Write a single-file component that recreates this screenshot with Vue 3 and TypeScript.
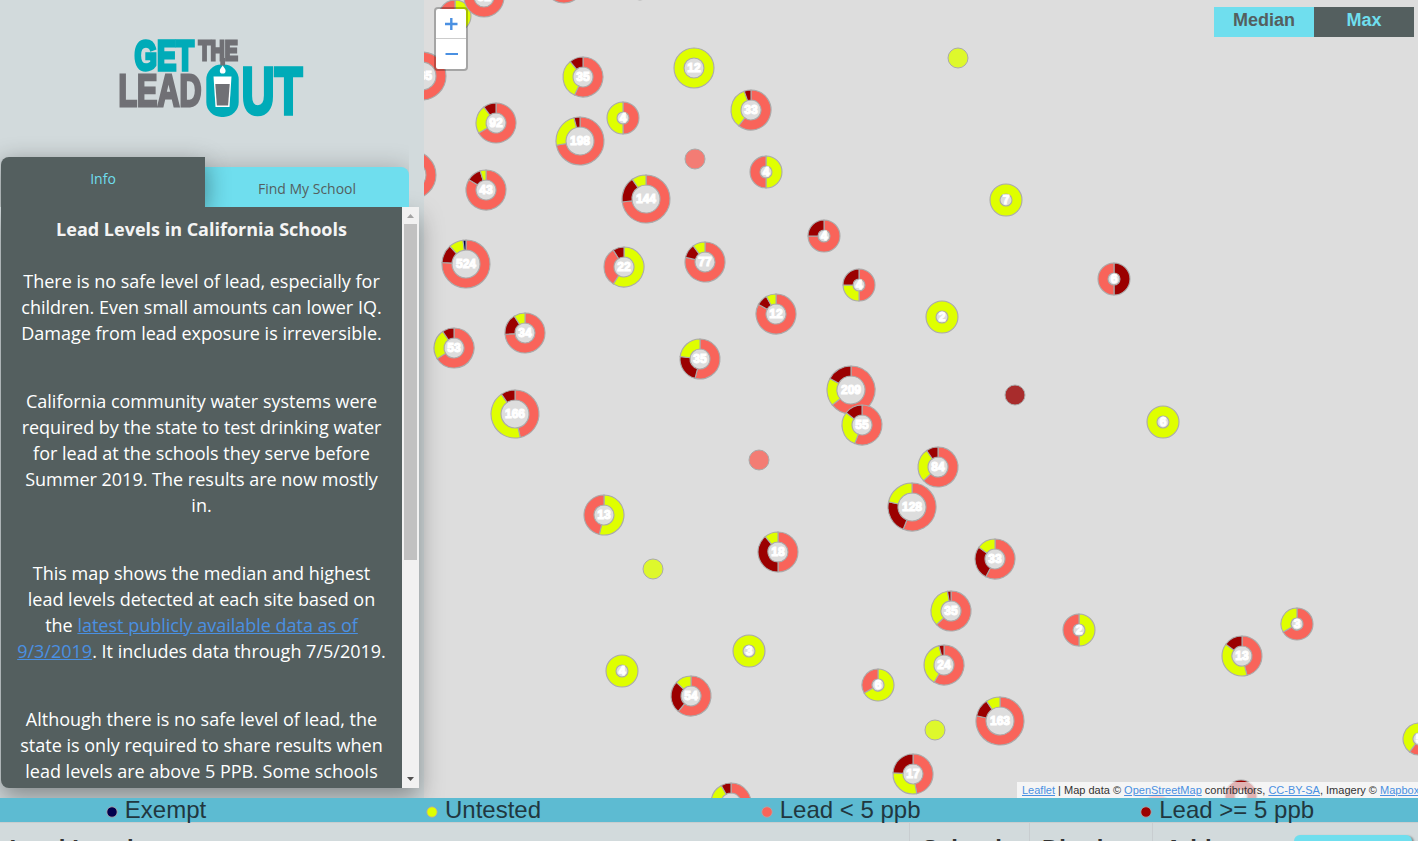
<script setup lang="ts">
type Tone = 'r' | 'y' | 'd' | 'n'
interface Slice { tone: Tone; to: number }
interface Cluster { x: number; y: number; r: number; label: string; slices: Slice[] }

const fills: Record<Tone, string> = { r: '#f9645a', y: '#dfff00', d: '#9b0000', n: '#00004d' }

// x, y, radius, count, then "tone:end fraction" pairs going clockwise from the top
const rows: [number, number, number, string, string][] = [
  [422, 76, 24, '165', 'r:1'],
  [412, 175, 24, '', 'r:1'],
  [455, 16, 16, '', 'y:.5 r:1'],
  [484, -3, 20, '51', 'r:1'],
  [564, -17, 20, '', 'r:1'],
  [583, 77, 20, '35', 'r:.57 y:.89 d:1'],
  [694, 68, 20, '12', 'y:1'],
  [496, 123, 20, '92', 'r:.667 y:.897 d:1'],
  [580, 141, 24, '198', 'r:.722 y:.96 d:1'],
  [623, 118, 16, '4', 'r:.5 y:1'],
  [751, 110, 20, '33', 'r:.606 y:.945 d:1'],
  [486, 190, 20, '43', 'r:.837 d:.953 y:1'],
  [646, 199, 24, '144', 'r:.73 d:.903 y:1'],
  [766, 172, 16, '4', 'y:.5 r:1'],
  [1006, 200, 16, '7', 'y:1'],
  [466, 264, 24, '524', 'r:.76 d:.883 y:.98 n:1'],
  [624, 267, 20, '22', 'y:.59 r:.91 d:1'],
  [705, 262, 20, '77', 'r:.788 d:.9 y:1'],
  [525, 333, 20, '34', 'r:.74 d:.91 y:1'],
  [454, 348, 20, '53', 'r:.66 y:.905 d:1'],
  [700, 359, 20, '35', 'r:.54 d:.77 y:1'],
  [515, 414, 24, '166', 'r:.465 y:.905 d:1'],
  [776, 314, 20, '12', 'r:.83 d:.92 y:1'],
  [824, 236, 16, '4', 'r:.75 d:1'],
  [859, 285, 16, '4', 'r:.5 y:.75 d:1'],
  [942, 317, 16, '2', 'y:1'],
  [1114, 279, 16, '6', 'd:.5 r:1'],
  [1163, 422, 16, '6', 'y:1'],
  [851, 390, 24, '209', 'r:.643 y:.83 d:1'],
  [862, 425, 20, '55', 'r:.56 y:.855 d:1'],
  [938, 467, 20, '84', 'r:.63 y:.905 d:1'],
  [912, 507, 24, '128', 'r:.56 d:.785 y:1'],
  [778, 552, 20, '18', 'r:.5 d:.89 y:1'],
  [604, 515, 20, '13', 'y:.538 r:1'],
  [995, 559, 20, '33', 'r:.576 d:.85 y:1'],
  [951, 611, 20, '35', 'r:.63 y:.972 d:1'],
  [944, 665, 20, '24', 'r:.583 y:.96 d:1'],
  [622, 671, 16, '4', 'y:1'],
  [749, 651, 16, '3', 'y:1'],
  [691, 696, 20, '54', 'r:.61 d:.87 y:1'],
  [878, 685, 16, '6', 'y:.667 r:1'],
  [1000, 721, 24, '163', 'r:.785 d:.905 y:1'],
  [913, 774, 20, '17', 'r:.47 y:.76 d:1'],
  [731, 803, 20, '', 'r:.6 y:.92 d:1'],
  [1079, 630, 16, '2', 'y:.5 r:1'],
  [1242, 656, 20, '13', 'r:.46 y:.85 d:1'],
  [1297, 624, 16, '3', 'r:.667 y:1'],
  [1419, 739, 16, '5', 'r:.6 y:1'],
  [1241, 796, 16, '2', 'd:1'],
  [1157, 811, 16, '', 'r:1'],
]

const clusters: Cluster[] = rows.map(([x, y, r, label, spec]) => ({
  x, y, r, label,
  slices: spec.split(' ').map((s) => {
    const [tone, to] = s.split(':')
    return { tone: tone as Tone, to: Number(to) }
  }),
}))

const dots: { x: number; y: number; tone: Tone }[] = [
  { x: 958, y: 58, tone: 'y' },
  { x: 695, y: 159, tone: 'r' },
  { x: 1015, y: 395, tone: 'd' },
  { x: 759, y: 460, tone: 'r' },
  { x: 653, y: 569, tone: 'y' },
  { x: 935, y: 730, tone: 'y' },
  { x: 640, y: -10, tone: 'r' },
]

function ring(c: Cluster, i: number): string {
  const R = c.r
  const q = c.r - 10
  const a0 = (i ? c.slices[i - 1].to : 0) * Math.PI * 2
  const a1 = c.slices[i].to * Math.PI * 2
  const p = (rad: number, a: number) => `${(rad * Math.sin(a)).toFixed(2)} ${(-rad * Math.cos(a)).toFixed(2)}`
  if (a1 - a0 > 6.28) {
    return `M0 ${-R}A${R} ${R} 0 1 1 0 ${R}A${R} ${R} 0 1 1 0 ${-R}M0 ${-q}A${q} ${q} 0 1 0 0 ${q}A${q} ${q} 0 1 0 0 ${-q}`
  }
  const big = a1 - a0 > Math.PI ? 1 : 0
  return `M${p(R, a0)}A${R} ${R} 0 ${big} 1 ${p(R, a1)}L${p(q, a1)}A${q} ${q} 0 ${big} 0 ${p(q, a0)}Z`
}

const legend: { tone: Tone; label: string }[] = [
  { tone: 'n', label: 'Exempt' },
  { tone: 'y', label: 'Untested' },
  { tone: 'r', label: 'Lead < 5 ppb' },
  { tone: 'd', label: 'Lead >= 5 ppb' },
]
</script>

<template>
  <div class="page">
    <div class="main">
      <aside class="side">
        <header class="brand">
          <svg width="424" height="157" viewBox="0 0 424 157" class="logo">
            <g class="teal">
              <text x="134.500" y="69.500" font-size="43" textLength="59.500" lengthAdjust="spacingAndGlyphs">GET</text>
              <text x="241.500" y="114" font-size="66" textLength="61" lengthAdjust="spacingAndGlyphs">UT</text>
            </g>
            <g class="gray">
              <text x="198.500" y="59.600" font-size="28.500" textLength="39.500" lengthAdjust="spacingAndGlyphs">THE</text>
              <text x="118.500" y="105.700" font-size="43.500" textLength="83" lengthAdjust="spacingAndGlyphs">LEAD</text>
            </g>
            <rect x="206.300" y="64.500" width="32.400" height="52.500" rx="15" fill="#00abb8" />
            <path d="M220.300 58h4.800v7.500h-4.800z" fill="#707075" />
            <path d="M222.700 65.500c.8 2 2.900 3.200 2.900 5.200a2.900 2.900 0 0 1-5.800 0c0-2 2.100-3.200 2.900-5.200z" fill="#fff" />
            <path d="M213.500 76.500h18l-2 30.500h-14z" fill="#fff" />
            <path d="M215.300 84h14.400l-1.600 21.500h-11.200z" fill="#707075" />
          </svg>
        </header>
        <nav class="tabs">
          <div class="tab on">Info</div>
          <div class="tab off">Find My School</div>
        </nav>
        <div class="panel">
          <div class="copy">
            <h1>Lead Levels in California Schools</h1>
            <p>There is no safe level of lead, especially for<br>children. Even small amounts can lower IQ.<br>Damage from lead exposure is irreversible.</p>
            <p>California community water systems were<br>required by the state to test drinking water<br>for lead at the schools they serve before<br>Summer 2019. The results are now mostly<br>in.</p>
            <p>This map shows the median and highest<br>lead levels detected at each site based on<br>the <a>latest publicly available data as of<br>9/3/2019</a>. It includes data through 7/5/2019.</p>
            <p>Although there is no safe level of lead, the<br>state is only required to share results when<br>lead levels are above 5 PPB. Some schools</p>
          </div>
          <div class="bar">
            <svg width="17" height="17" viewBox="0 0 17 17"><path d="M5 11l3.500-4L12 11z" fill="#a3a3a3" /></svg>
            <div class="thumb"></div>
            <svg width="17" height="17" viewBox="0 0 17 17" class="down"><path d="M5 6h7L8.500 10z" fill="#505050" /></svg>
          </div>
        </div>
      </aside>

      <section class="map">
        <svg width="994" height="798" viewBox="424 0 994 798" class="pins">
          <circle v-for="(d, i) in dots" :key="'d' + i" :cx="d.x" :cy="d.y" r="10" :fill="fills[d.tone]" fill-opacity=".8" stroke="#aaa" />
          <g v-for="(c, i) in clusters" :key="i" :transform="`translate(${c.x} ${c.y})`">
            <path v-for="(s, k) in c.slices" :key="k" :d="ring(c, k)" :fill="fills[s.tone]" stroke="#aaa" stroke-width="1.100" />
            <text y="4.300" text-anchor="middle">{{ c.label }}</text>
          </g>
        </svg>
        <div class="zoom">
          <div class="zin"><svg width="30" height="29" viewBox="0 0 30 29"><path d="M9 15h12.500M15.300 9v12" stroke="#4a90e2" stroke-width="2.400" fill="none" /></svg></div>
          <div><svg width="30" height="30" viewBox="0 0 30 30"><path d="M9.500 15h12.500" stroke="#4a90e2" stroke-width="2" /></svg></div>
        </div>
        <div class="switch">
          <div class="median">Median</div>
          <div class="max">Max</div>
        </div>
        <div class="credit"><a>Leaflet</a> | Map data © <a>OpenStreetMap</a> contributors, <a>CC-BY-SA</a>, Imagery © <a>Mapbox</a></div>
      </section>
    </div>

    <div class="legend">
      <div v-for="l in legend" :key="l.label" class="key">
        <svg width="12" height="12" viewBox="0 0 12 12"><circle cx="6" cy="6" r="5.200" :fill="fills[l.tone]" stroke="#b5a5a8" stroke-width=".8" /></svg>
        <span>{{ l.label }}</span>
      </div>
    </div>

    <div class="thead">
      <div class="th wide">Lead Level</div>
      <div class="th school">School</div>
      <div class="th district">District</div>
      <div class="th address">Address</div>
      <div class="btn"></div>
    </div>
  </div>
</template>

<style>
html, body { margin: 0; overflow: hidden; }
</style>

<style scoped>
.page {
  width: 1418px;
  height: 841px;
  overflow: hidden;
  background: #d2dadc;
  font-family: "Liberation Sans", Arial, sans-serif;
}
.main { display: flex; height: 798px; overflow: hidden; }
.side {
  position: relative;
  z-index: 2;
  width: 424px;
  height: 798px;
  flex: none;
  background: #d2dadc;
}
.brand { height: 157px; }
.logo { display: block; filter: blur(.35px); }
.logo text { font-family: "Liberation Sans", Arial, sans-serif; font-weight: bold; }
.teal { fill: #00abb8; stroke: #00abb8; stroke-width: 3.600; }
.gray { fill: #707075; stroke: #707075; stroke-width: 2.800; }
.tabs {
  display: flex;
  align-items: flex-end;
  width: 408px;
  height: 50px;
  margin-left: 1px;
  font: 14px "Open Sans", "Noto Sans", sans-serif;
  text-align: center;
  clip-path: inset(-30px 0 0 -1px);
}
.tab { width: 204px; box-sizing: border-box; box-shadow: 0 0 24px rgba(0, 0, 0, .22); }
.on {
  position: relative;
  z-index: 1;
  height: 50px;
  line-height: 44px;
  color: #6fdeee;
  background: #545f5f;
  border-radius: 8px 0 0 0;
}
.off {
  height: 40px;
  line-height: 43px;
  color: #545f5f;
  background: #6fdeee;
  border-radius: 0 8px 0 0;
}
.on { box-shadow: 0 6px 24px rgba(0, 0, 0, .42); }
.panel {
  display: flex;
  width: 418px;
  height: 581px;
  margin-left: 1px;
  background: #545f5f;
  border-radius: 0 0 0 8px;
  box-shadow: 0 10px 24px rgba(0, 0, 0, .36);
}
.copy {
  width: 401px;
  height: 581px;
  box-sizing: border-box;
  padding-top: 9px;
  overflow: hidden;
  color: #fff;
  font: 18px/26px "Open Sans", "Noto Sans", sans-serif;
  text-align: center;
  white-space: nowrap;
}
h1 { margin: 0 0 26px; font-size: 18px; line-height: 26px; font-weight: 700; color: #f4f4f4; }
p { margin: 0 0 42px; }
.copy a { color: #4a90e2; text-decoration: underline; }
.bar { display: flex; flex-direction: column; width: 17px; background: #f1f1f1; }
.bar svg { display: block; }
.thumb { width: 13px; height: 336px; margin: 0 2px; background: #c1c1c1; }
.down { margin-top: auto; }
.map { position: relative; width: 994px; height: 798px; overflow: hidden; background: #ddd; }
.pins { display: block; }
.pins text { font: bold 12px "Liberation Sans", Arial, sans-serif; fill: #fff; stroke: #fff; stroke-width: 1.100px; }
.zoom {
  position: absolute;
  left: 10px;
  top: 7px;
  width: 30px;
  height: 60px;
  border: 2px solid rgba(0, 0, 0, .25);
  border-radius: 4px;
  background: #fff;
  background-clip: padding-box;
}
.zoom svg { display: block; }
.zin { border-bottom: 1px solid #ccc; }
.switch {
  position: absolute;
  top: 7px;
  right: 4px;
  display: flex;
  font-weight: bold;
  font-size: 18px;
  line-height: 26px;
  text-align: center;
}
.switch div { width: 100px; height: 30px; }
.median { background: #6fdeee; color: #545f5f; }
.max { background: #545f5f; color: #6fdeee; }
.credit {
  position: absolute;
  left: 593px;
  bottom: 0;
  width: 420px;
  height: 16px;
  padding-left: 5px;
  background: rgba(255, 255, 255, .7);
  color: #333;
  font-size: 11px;
  line-height: 16px;
  white-space: nowrap;
}
.credit a { color: #4a90e2; text-decoration: underline; }
.legend {
  position: relative;
  z-index: 3;
  display: flex;
  justify-content: space-around;
  height: 24px;
  margin: 0 -6px 0 -4px;
  background: #5dbbd2;
  border-bottom: 1px solid #c9cdcf;
  color: #21373f;
  font-size: 24px;
  line-height: 24px;
}
.key { display: flex; gap: 7px; white-space: nowrap; }
.key svg { margin-top: 8px; }
.thead { display: flex; height: 30px; font-size: 24px; font-weight: bold; line-height: 28px; color: #333; }
.th { box-sizing: border-box; padding: 11.500px 0 0 12px; border-right: 1px solid #c8cdd0; }
.wide { width: 910px; padding-left: 9.500px; }
.school { width: 120px; }
.district { width: 123px; }
.address { width: 141px; border: 0; }
.btn { width: 118px; height: 30px; margin-top: 12px; background: #6fdeee; border-radius: 6px; box-shadow: 2px 1px 2px rgba(0, 0, 0, .35); }
</style>
